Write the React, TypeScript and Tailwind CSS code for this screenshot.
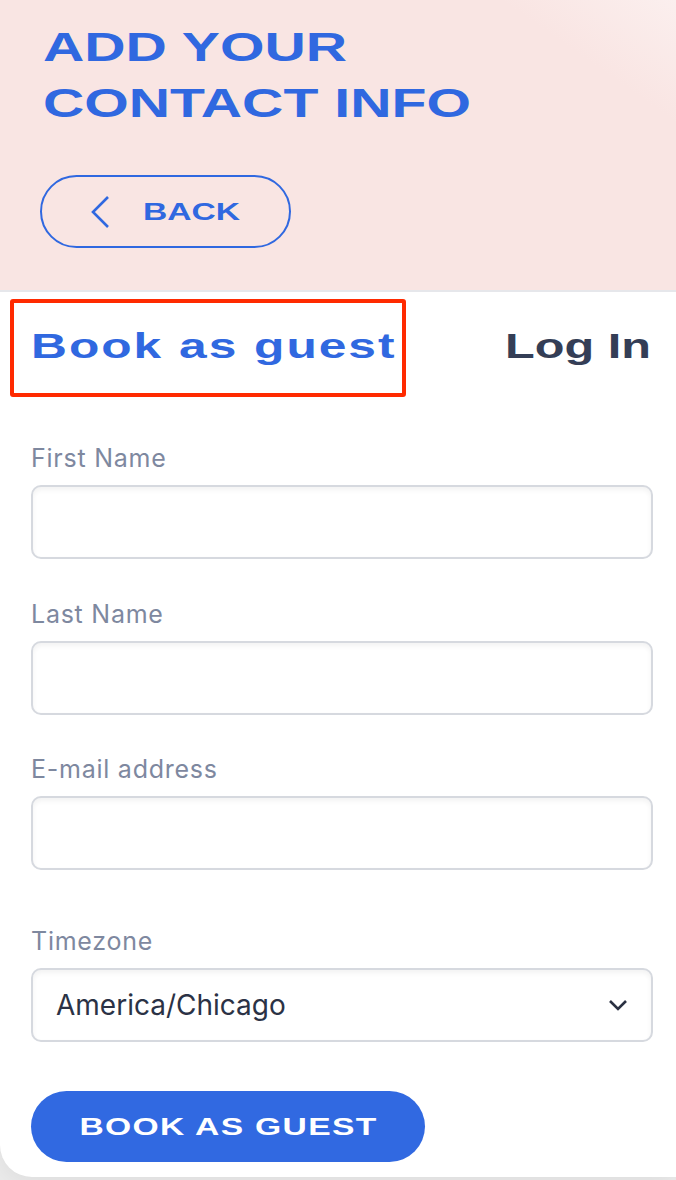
import { useState } from "react";

const wide = "font-['Liberation_Sans','Arial',sans-serif] font-bold";

function Field({ label, top }: { label: string; top: string }) {
  return (
    <div className={top}>
      <label className="block text-[25px] leading-[28px] tracking-[0.03em] text-[#7e889f]">{label}</label>
      <input
        type="text"
        className="mt-[13px] block h-[74px] w-full rounded-[10px] border-2 border-[#d6d9df] bg-white px-[23px] text-[26px] text-[#2b3245] shadow-[inset_0_3px_5px_rgba(0,0,0,0.05)] outline-none"
      />
    </div>
  );
}

export default function App() {
  const [tab, setTab] = useState("guest");

  return (
    <div className="min-h-[1180px] overflow-hidden bg-[#ebebeb] font-['Inter','Noto_Sans',sans-serif]">
      <div className="rounded-bl-[32px] bg-white pb-[15px] shadow-[0_6px_24px_rgba(0,0,0,0.06)]">
        <header className="h-[292px] border-b-2 border-[#e6e7eb] bg-[linear-gradient(215deg,#fbefee_0%,#f9e5e3_16%)] pl-[40px] pt-[19px]">
          <h1 className={`${wide} pl-[3px] text-[40px] leading-[56px] text-[#3068e0]`}>
            <span className="block">
              <span className="inline-block origin-left scale-x-[1.43]">ADD YOUR</span>
            </span>
            <span className="block">
              <span className="inline-block origin-left scale-x-[1.43]">CONTACT INFO</span>
            </span>
          </h1>
          <button className="mt-[44px] flex h-[73px] w-[251px] items-center rounded-full border-2 border-[#3068e0] pl-[49px] text-[#3068e0]">
            <svg width="18" height="32" viewBox="0 0 18 32" fill="none">
              <path d="M17 1 L2 16 L17 31" stroke="currentColor" strokeWidth="2.6" />
            </svg>
            <span className={`${wide} ml-[34px] inline-block origin-left scale-x-[1.4] text-[24px] leading-none`}>
              BACK
            </span>
          </button>
        </header>

        <div className="flex items-start justify-between pl-[10px] pr-[25px] pt-[7px]">
          <div
            role="tab"
            onClick={() => setTab("guest")}
            className="h-[98px] w-[396px] cursor-pointer rounded-[3px] border-4 border-[#ff2a00] pl-[17px] pt-[25px]"
          >
            <span
              className={`${wide} inline-block origin-left scale-x-[1.42] text-[35px] leading-[35px] tracking-[0.04em] ${
                tab === "guest" ? "text-[#3068e0]" : "text-[#343e56]"
              }`}
            >
              Book as guest
            </span>
          </div>
          <div role="tab" onClick={() => setTab("login")} className="cursor-pointer pt-[29px]">
            <span
              className={`${wide} inline-block origin-right scale-x-[1.39] text-[35px] leading-[35px] ${
                tab === "login" ? "text-[#3068e0]" : "text-[#343e56]"
              }`}
            >
              Log In
            </span>
          </div>
        </div>

        <form className="pl-[31px] pr-[23px]">
          <Field label="First Name" top="mt-[47px]" />
          <Field label="Last Name" top="mt-[41px]" />
          <Field label="E-mail address" top="mt-[40px]" />

          <div className="mt-[57px]">
            <label className="block text-[25px] leading-[28px] tracking-[0.03em] text-[#7e889f]">Timezone</label>
            <div className="mt-[13px] flex h-[74px] items-center justify-between rounded-[10px] border-2 border-[#d6d9df] bg-white pl-[23px] pr-[23px] shadow-[inset_0_3px_5px_rgba(0,0,0,0.05)]">
              <span className="text-[28px] text-[#2b3245]">America/Chicago</span>
              <svg width="20" height="12" viewBox="0 0 20 12" fill="none" className="text-[#2a3142]">
                <path d="M2 2 L10 10 L18 2" stroke="currentColor" strokeWidth="2.6" />
              </svg>
            </div>
          </div>

          <button
            type="button"
            className="mt-[49px] flex h-[71px] w-[394px] items-center justify-center rounded-full bg-[#3169e1] text-white"
          >
            <span className={`${wide} inline-block origin-center scale-x-[1.4] text-[24px] leading-none tracking-[0.04em]`}>
              BOOK AS GUEST
            </span>
          </button>
        </form>
      </div>
    </div>
  );
}
